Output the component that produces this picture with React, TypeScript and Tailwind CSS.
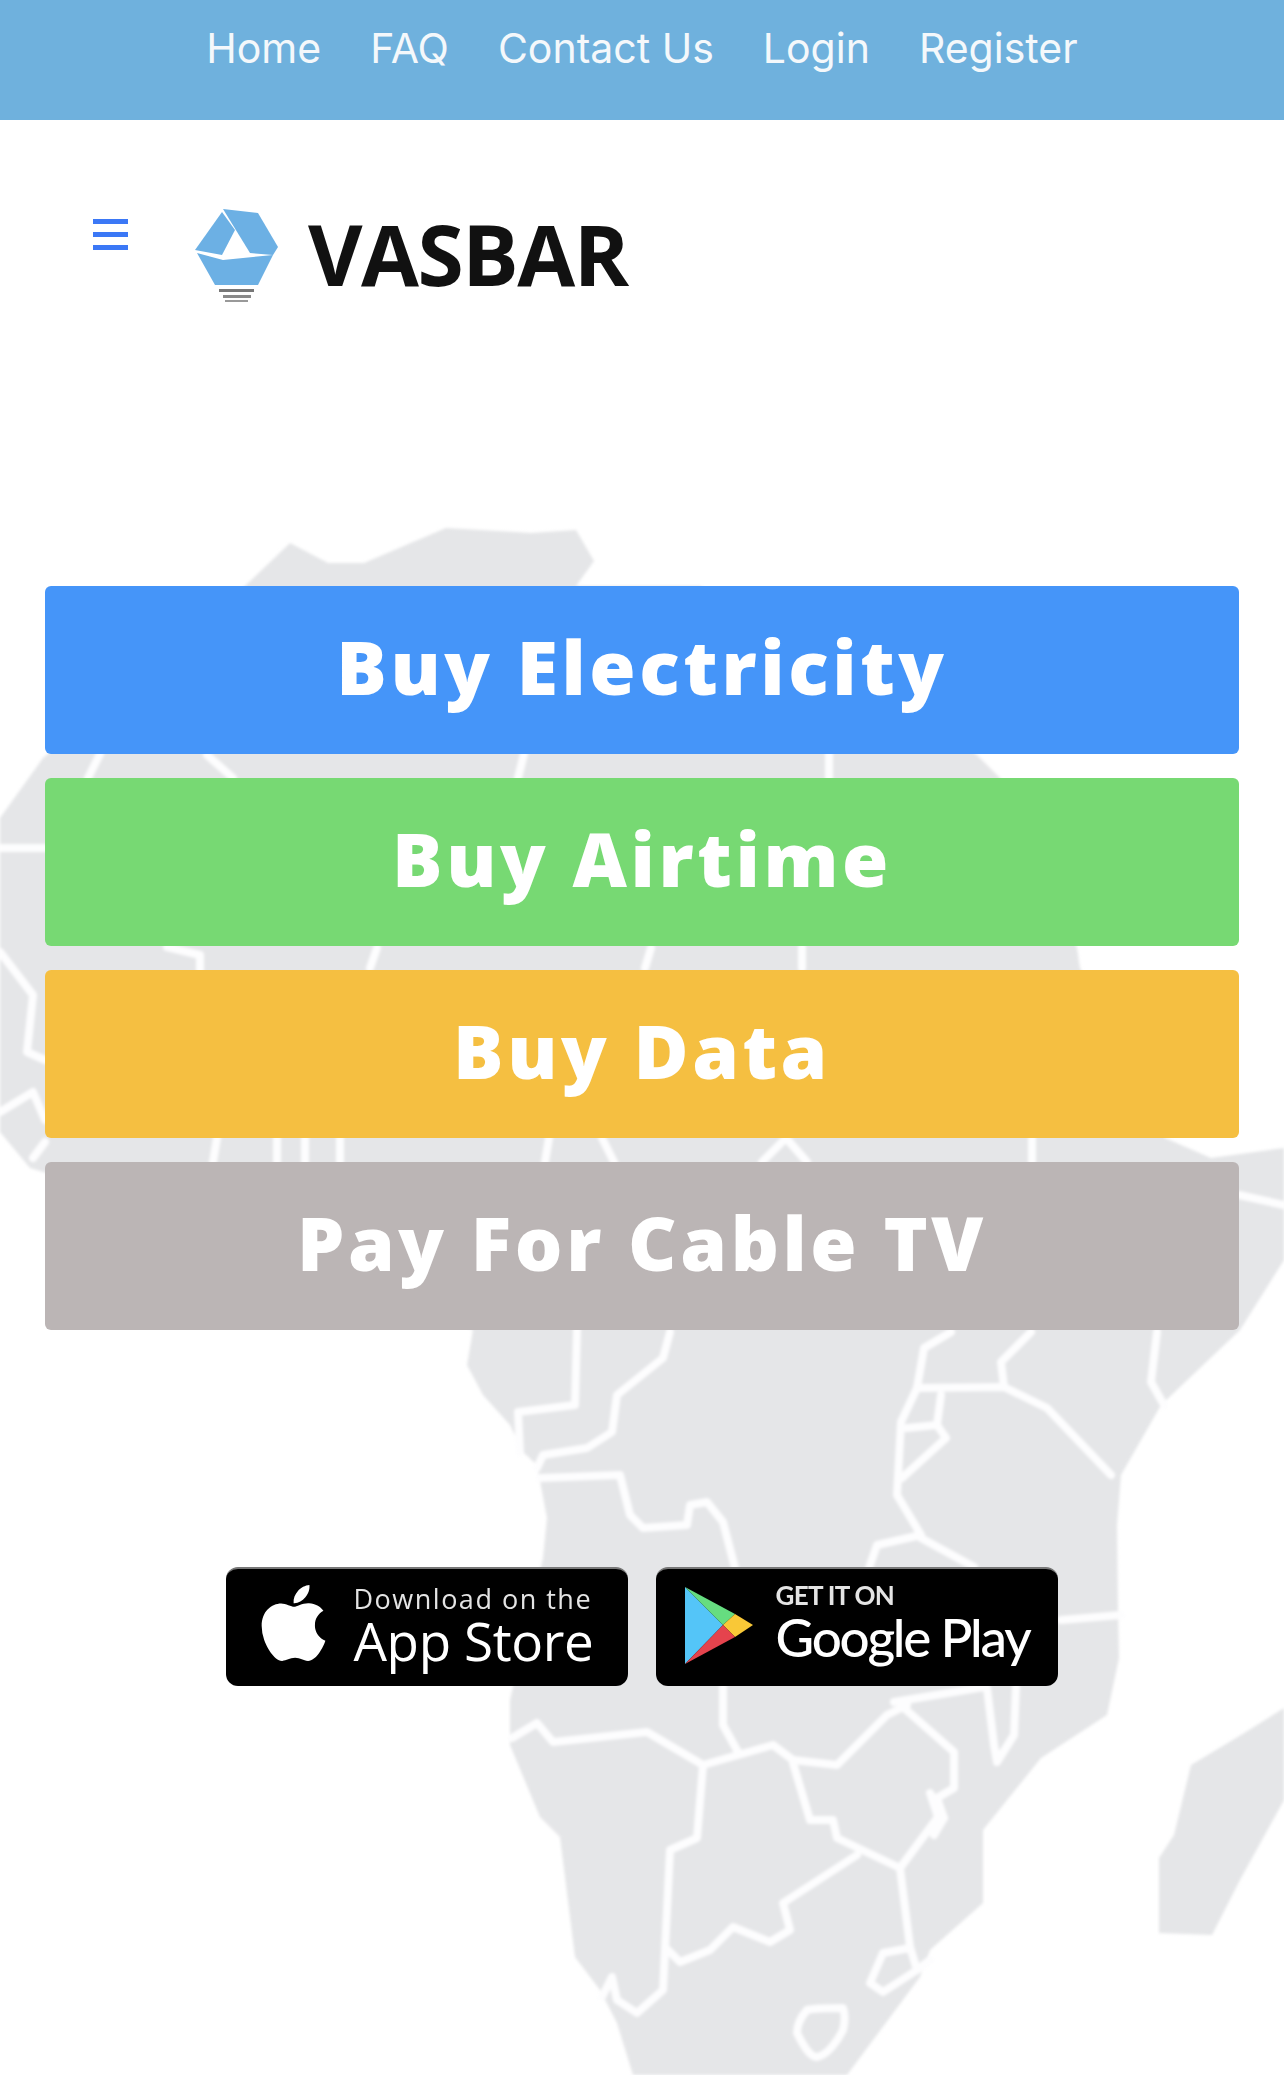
import { FaApple } from "react-icons/fa";

const navLinks = ["Home", "FAQ", "Contact Us", "Login", "Register"];

const actions = [
  { label: "Buy Electricity", color: "bg-[#4595f9]" },
  { label: "Buy Airtime", color: "bg-[#77d973]" },
  { label: "Buy Data", color: "bg-[#f5bf41]" },
  { label: "Pay For Cable TV", color: "bg-[#bbb5b5]" },
];

// country borders, traced in page coordinates
const borders = [
  "100,754 88,778",
  "207,755 233,778",
  "524,754 518,778",
  "829,754 829,778",
  "167,947 200,955 200,970",
  "377,948 370,968",
  "651,948 645,968",
  "802,947 802,968",
  "217,1138 213,1162",
  "277,1138 277,1162",
  "305,1138 305,1162",
  "340,1138 340,1162",
  "549,1138 545,1162",
  "602,1138 614,1162",
  "762,1162 786,1138 807,1162",
  "1032,1138 1032,1162",
  "1239,1195 1284,1205",
  "0,848 45,848",
  "0,952 33,995 27,1052 45,1060",
  "0,1112 33,1092 45,1120",
  "33,1158 45,1142",
  "577,1330 575,1405 518,1412 520,1452",
  "670,1332 663,1358 617,1395 612,1432 587,1448 543,1455 537,1468",
  "540,1478 620,1475 630,1515 643,1528 687,1525 690,1505 707,1502 723,1522 735,1568",
  "723,1687 723,1725 738,1752",
  "512,1738 537,1723 553,1742 647,1732 703,1765 773,1745 793,1760 837,1765 887,1715 907,1705",
  "703,1765 697,1838 670,1850 663,1990 637,2013 617,2000 612,1977 602,1997",
  "668,1950 680,1962 710,1950 733,1927 770,1942 790,1930 783,1903 857,1855",
  "793,1763 810,1820 833,1820 837,1838 900,1868 938,1817 930,1793 944,1818",
  "900,1868 910,1947 917,1970",
  "910,1948 883,1953 870,1983 883,1992 917,1970 930,1960",
  "951,1332 924,1348 917,1388 901,1422 897,1495 921,1535 877,1545 869,1568",
  "917,1388 1004,1387 1047,1408 1111,1475",
  "1004,1387 1001,1362 1031,1332",
  "1157,1332 1151,1382 1164,1405",
  "941,1395 937,1425 946,1438 902,1478",
  "907,1428 937,1425",
  "921,1538 974,1567",
  "1061,1620 1121,1615",
  "987,1688 994,1745 997,1762 1014,1735 1016,1687",
  "894,1702 984,1687",
  "904,1708 954,1752 954,1788 937,1798 944,1818 934,1835",
];

function AfricaMap() {
  return (
    <svg viewBox="0 0 1284 2075" className="absolute top-0 left-0 w-[1284px] h-[2075px] blur-[1.5px]">
      <polygon
        fill="#e5e6e8"
        points="290,543 328,563 364,563 446,528 531,533 576,530 594,561 576,586 700,586 977,755 1000,778 1077,948 1080,968 1165,1138 1211,1158 1284,1148 1284,1260 1240,1330 1161,1405 1121,1475 1117,1525 1118,1608 1119,1658 1107,1715 1041,1758 983,1830 983,1903 930,1950 920,1977 847,2075 633,2075 617,2023 600,1990 575,1957 560,1837 540,1817 510,1745 510,1700 543,1558 547,1518 537,1465 523,1452 510,1425 483,1395 467,1365 473,1330 300,1250 30,1168 0,1132 0,818 43,758 245,586"
      />
      <polygon
        fill="#e5e6e8"
        points="1284,1708 1241,1735 1191,1765 1174,1835 1159,1858 1159,1933 1212,1935 1240,1880 1284,1800"
      />
      <g fill="none" stroke="#fdfdfe" strokeWidth="8" strokeLinejoin="round" strokeLinecap="round">
        {borders.map((points) => (
          <polyline key={points} points={points} />
        ))}
        <path d="M843 2008 C830 2008 815 2008 807 2010 C800 2018 797 2025 797 2033 C803 2045 810 2057 817 2057 C828 2055 838 2040 843 2030 C845 2022 845 2014 843 2008 Z" />
      </g>
    </svg>
  );
}

function Logo() {
  return (
    <div className="flex items-start">
      <svg viewBox="0 0 83 95" className="w-[83px] h-[95px] shrink-0 blur-[0.4px]">
        <polygon fill="#6cb0e4" points="27,4 0,42 27,47 40,22" />
        <polygon fill="#6cb0e4" points="28,1 63,5 83,39 78,47 55,45" />
        <polygon fill="#6cb0e4" points="2,45 28,52 78,47 63,77 20,77" />
        <rect x="24" y="81" width="35" height="3" fill="#777777" />
        <rect x="28" y="87" width="28" height="3" fill="#8a8a8a" />
        <rect x="30" y="92" width="23" height="2" fill="#999999" />
      </svg>
      <span className="ml-[30px] mt-[-11px] font-['Open_Sans',sans-serif] font-bold text-[84px] leading-[114px] text-[#111111] tracking-[-1.5px] blur-[0.4px]">
        VASBAR
      </span>
    </div>
  );
}

function AppStoreBadge() {
  return (
    <div className="w-[402px] h-[119px] bg-black rounded-xl border-t-2 border-t-[#777777] flex items-start pl-[35px] pt-[10px] text-white blur-[0.5px]">
      <FaApple className="w-[65px] h-[88px] shrink-0" />
      <div className="ml-[28px] mt-[5px] flex flex-col">
        <span className="font-['Open_Sans',sans-serif] font-medium text-[27px] leading-[30px] tracking-[1.5px] text-[#e4e4e4] whitespace-nowrap">
          Download on the
        </span>
        <span className="font-['Open_Sans',sans-serif] font-medium text-[53px] leading-[54px] tracking-[-0.4px] whitespace-nowrap">
          App Store
        </span>
      </div>
    </div>
  );
}

function GooglePlayBadge() {
  return (
    <div className="w-[402px] h-[119px] bg-black rounded-xl border-t-2 border-t-[#777777] flex items-start pl-[29px] pt-[18px] text-white blur-[0.5px]">
      <svg viewBox="0 0 69 77" className="w-[69px] h-[77px] shrink-0">
        <polygon fill="#54c5f8" points="0,0 38,38 0,77" />
        <polygon fill="#66dd80" points="0,0 50,27 38,38" />
        <polygon fill="#f9c837" points="50,27 68,38 50,50 38,38" />
        <polygon fill="#e5434d" points="0,77 38,38 50,50" />
      </svg>
      <div className="ml-[22px] mt-[-7px] flex flex-col">
        <span className="font-['Lato',sans-serif] font-bold text-[26px] leading-[30px] tracking-[-0.7px] text-[#e4e4e4] whitespace-nowrap">
          GET IT ON
        </span>
        <span className="font-['Lato',sans-serif] font-medium text-[53px] leading-[54px] tracking-[-2.2px] whitespace-nowrap">
          Google Play
        </span>
      </div>
    </div>
  );
}

export default function App() {
  return (
    <main className="relative w-[1284px] h-[2075px] bg-white overflow-hidden">
      <AfricaMap />

      <div className="relative">
        {/* Top nav */}
        <header className="h-[120px] bg-[#6fb1dd] pt-[24px]">
          <nav className="flex justify-center gap-[49px] font-['Inter',sans-serif] text-[41px] leading-[48px] text-[#f4f8fb]">
            {navLinks.map((link) => (
              <a key={link}>{link}</a>
            ))}
          </nav>
        </header>

        {/* Menu button and logo */}
        <div className="flex items-start pl-[93px] pt-[88px]">
          <div className="mt-[11px] w-[35px] flex flex-col gap-[8px]">
            <span className="h-[5px] bg-[#3b78f6]" />
            <span className="h-[5px] bg-[#3b78f6]" />
            <span className="h-[5px] bg-[#3b78f6]" />
          </div>
          <div className="ml-[67px]">
            <Logo />
          </div>
        </div>

        {/* Actions */}
        <div className="mt-[275px] mx-[45px] flex flex-col gap-[24px]">
          {actions.map((action) => (
            <a
              key={action.label}
              className={`h-[168px] pb-[8px] rounded-md ${action.color} flex items-center justify-center font-['Open_Sans',sans-serif] font-extrabold text-[75px] tracking-[3.6px] text-white`}
            >
              {action.label}
            </a>
          ))}
        </div>

        {/* Store badges */}
        <div className="mt-[237px] flex justify-center gap-[28px] pr-[1px]">
          <AppStoreBadge />
          <GooglePlayBadge />
        </div>
      </div>
    </main>
  );
}
